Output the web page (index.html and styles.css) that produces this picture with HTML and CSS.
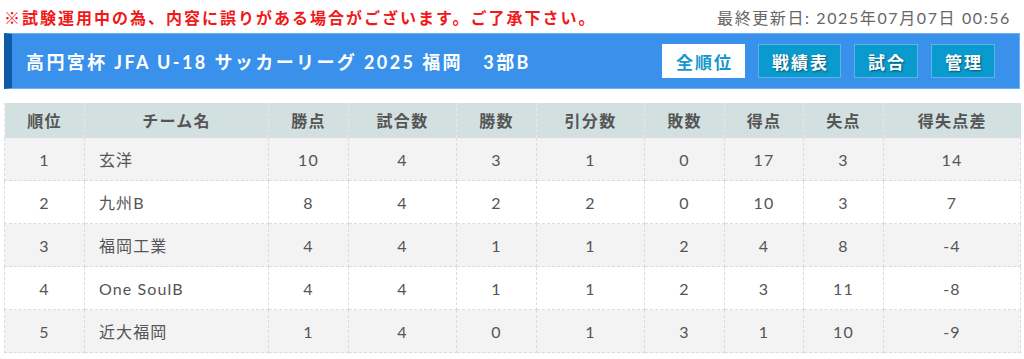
FILE: index.html
```html
<!DOCTYPE html>
<html lang="ja">
<head>
<meta charset="utf-8">
<link rel="stylesheet" href="styles.css">
</head>
<body>
<div class="page">
  <div class="topline">
    <span class="notice">※試験運用中の為、内容に誤りがある場合がございます。ご了承下さい。</span>
    <span class="updated">最終更新日: 2025年07月07日 00:56</span>
  </div>
  <div class="bar">
    <h1 class="title">高円宮杯 JFA U-18 サッカーリーグ 2025 福岡　3部B</h1>
    <nav class="btns">
      <span class="btn active">全順位</span>
      <span class="btn">戦績表</span>
      <span class="btn">試合</span>
      <span class="btn">管理</span>
    </nav>
  </div>
  <table class="standings">
    <colgroup>
      <col style="width:80px"><col style="width:184px"><col style="width:80px"><col style="width:108px"><col style="width:80px"><col style="width:108px"><col style="width:80px"><col style="width:79px"><col style="width:80px"><col style="width:137px">
    </colgroup>
    <thead>
      <tr><th>順位</th><th>チーム名</th><th>勝点</th><th>試合数</th><th>勝数</th><th>引分数</th><th>敗数</th><th>得点</th><th>失点</th><th>得失点差</th></tr>
    </thead>
    <tbody>
      <tr><td>1</td><td class="name">玄洋</td><td>10</td><td>4</td><td>3</td><td>1</td><td>0</td><td>17</td><td>3</td><td>14</td></tr>
      <tr><td>2</td><td class="name">九州B</td><td>8</td><td>4</td><td>2</td><td>2</td><td>0</td><td>10</td><td>3</td><td>7</td></tr>
      <tr><td>3</td><td class="name">福岡工業</td><td>4</td><td>4</td><td>1</td><td>1</td><td>2</td><td>4</td><td>8</td><td>-4</td></tr>
      <tr><td>4</td><td class="name">One SoulB</td><td>4</td><td>4</td><td>1</td><td>1</td><td>2</td><td>3</td><td>11</td><td>-8</td></tr>
      <tr><td>5</td><td class="name">近大福岡</td><td>1</td><td>4</td><td>0</td><td>1</td><td>3</td><td>1</td><td>10</td><td>-9</td></tr>
    </tbody>
  </table>
</div>
</body>
</html>
```
FILE: styles.css
```css
html, body {
  margin: 0;
  padding: 0;
  background: #fff;
}
body {
  font-family: "Lato", "Noto Sans CJK JP", sans-serif;
  color: #555;
}
.page {
  padding: 0 4px;
}
.topline {
  height: 33px;
  display: flex;
  align-items: center;
  justify-content: space-between;
  padding-right: 9px;
  box-sizing: border-box;
}
.notice {
  color: #f01818;
  font-weight: bold;
  font-size: 16px;
  letter-spacing: 2px;
}
.updated {
  color: #666;
  font-size: 16px;
  letter-spacing: 1.6px;
}
.bar {
  height: 56px;
  box-sizing: border-box;
  background: #3991eb;
  border: 1px solid #6db0f3;
  border-left: 8px solid #0f5ba6;
  display: flex;
  align-items: center;
  justify-content: space-between;
  padding: 0 24px 0 14px;
}
.title {
  margin: 0;
  color: #fff;
  font-size: 18px;
  font-weight: bold;
  letter-spacing: 2.4px;
}
.btns {
  display: flex;
  gap: 13px;
}
.btn {
  height: 34px;
  box-sizing: border-box;
  padding: 0 11px 0 13px;
  display: flex;
  align-items: center;
  background: #0a9acd;
  border: 1px solid #58b7e6;
  color: #fff;
  font-size: 17px;
  font-weight: bold;
  letter-spacing: 2px;
  text-shadow: 1px 1px 2px rgba(0,0,0,0.45);
}
.btn.active {
  background: #fff;
  color: #1597cf;
  border-color: #fff;
  text-shadow: none;
}
.standings {
  margin-top: 14px;
  width: 1016px;
  border-collapse: collapse;
  table-layout: fixed;
  font-size: 16px;
}
.standings th {
  background: #d3e0e0;
  height: 34px;
  font-weight: bold;
  color: #555;
  letter-spacing: 1.3px;
  border-left: 1px dashed #e6ecec;
  padding: 0;
}
.standings td {
  height: 42px;
  padding: 0;
  text-align: center;
  border: 1px dashed #dcdcdc;
  color: #555;
  letter-spacing: 1.1px;
}
.standings td.name {
  text-align: left;
  padding-left: 14px;
}
.standings tbody tr:nth-child(odd) td {
  background: #f3f3f3;
}
.standings tbody tr:nth-child(even) td {
  background: #fff;
}
```
